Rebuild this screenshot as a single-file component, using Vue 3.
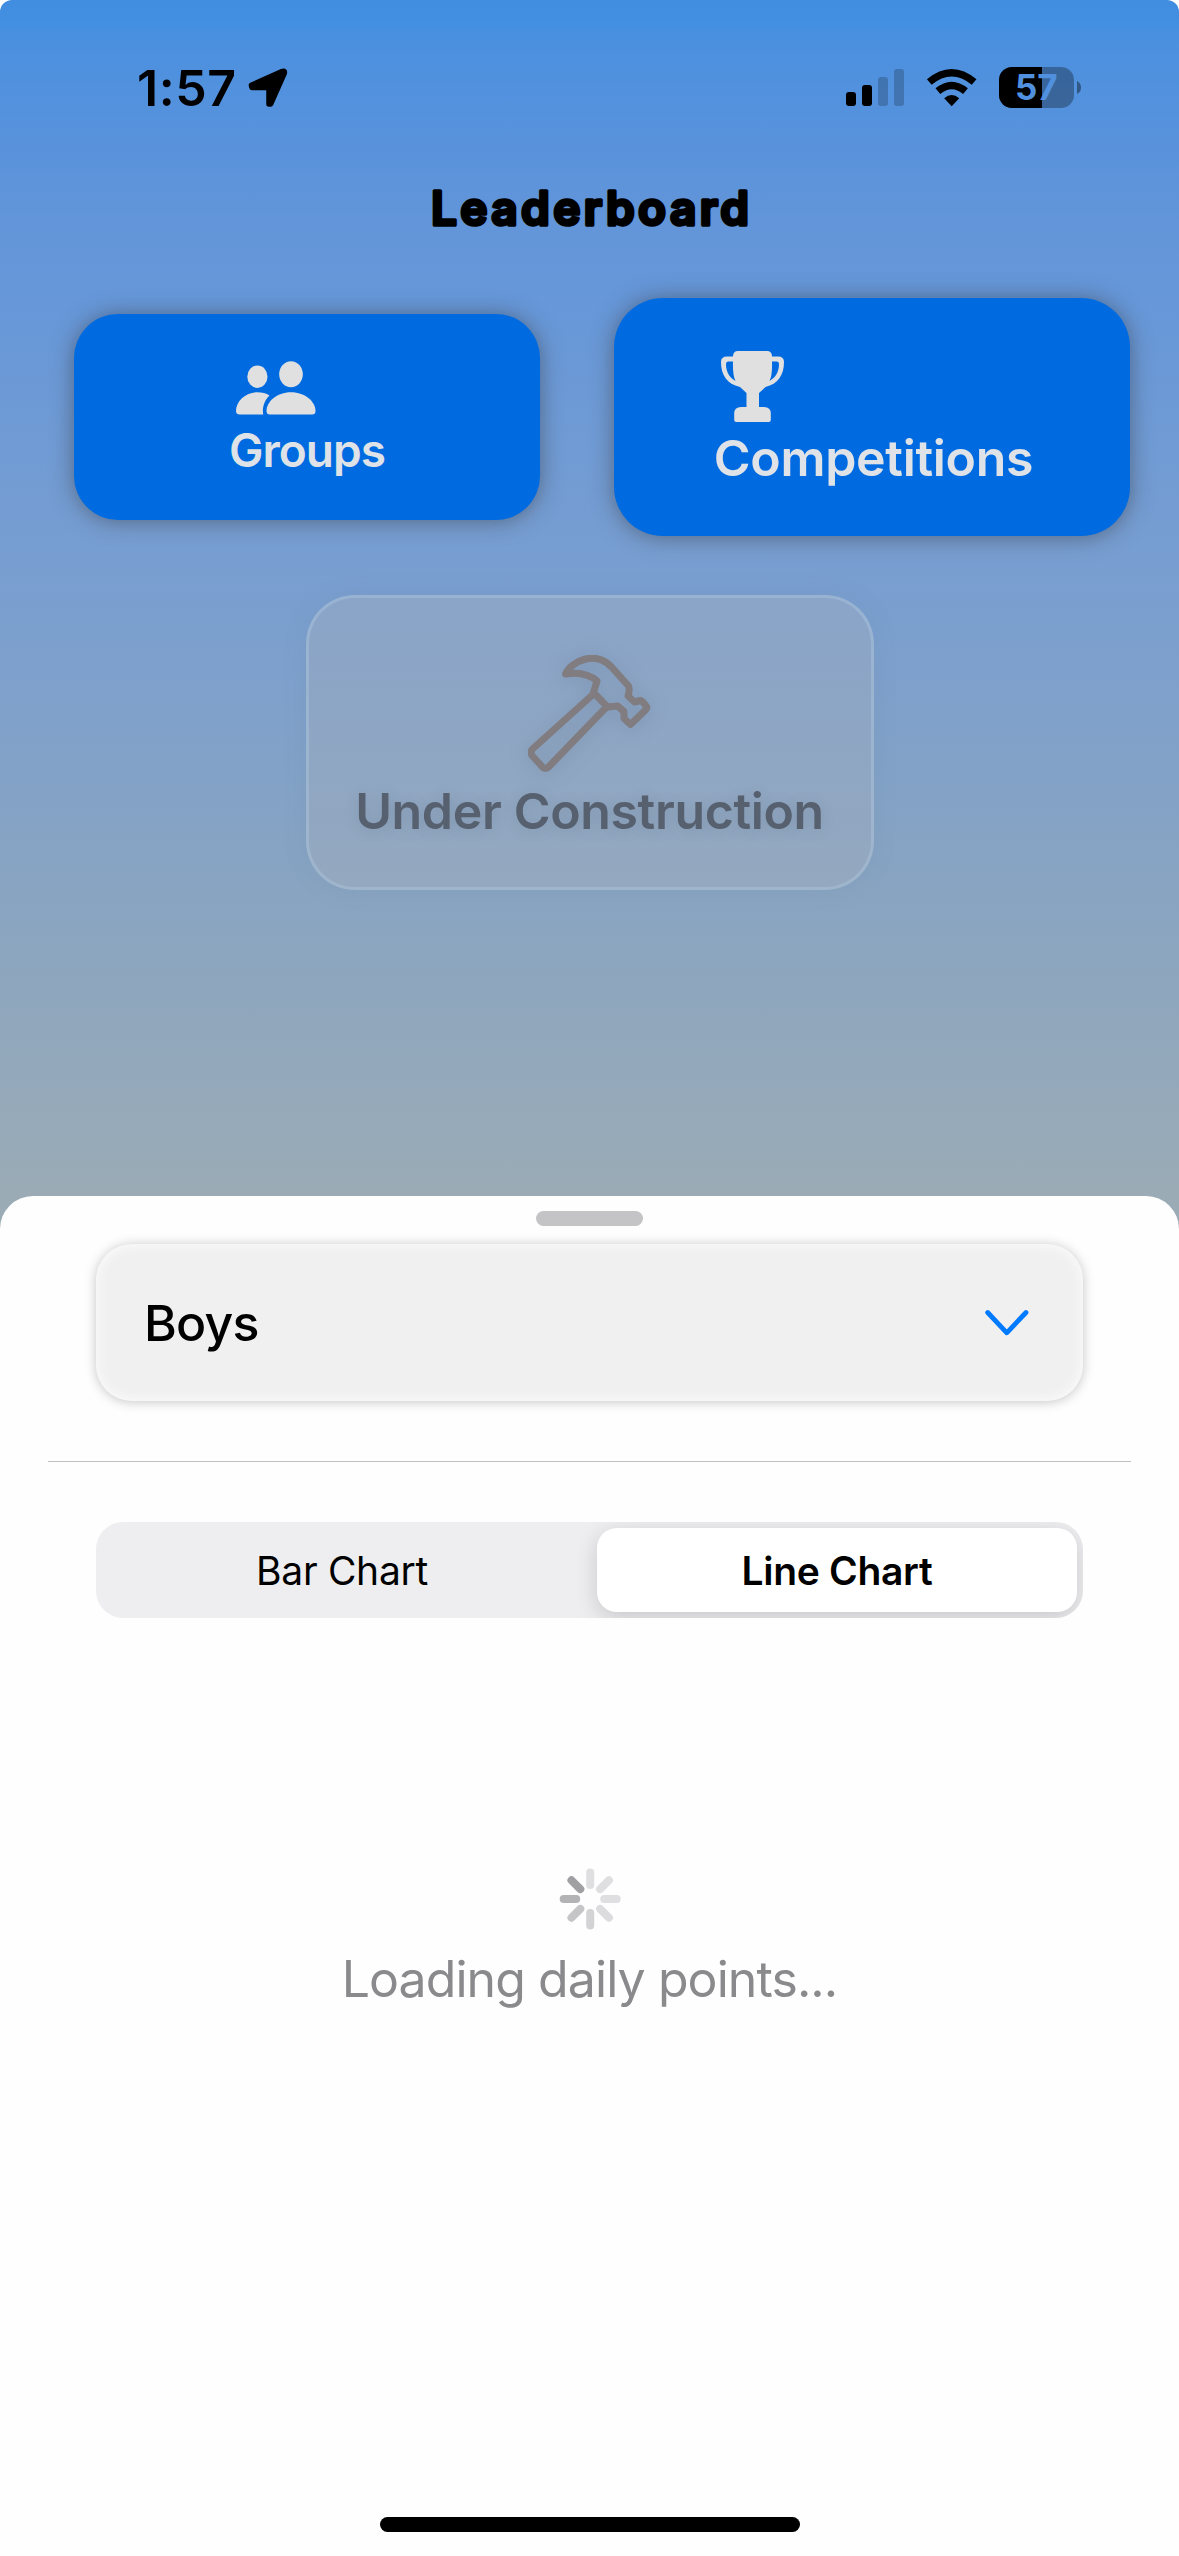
<script setup>
const petals = [
  { angle: 0, color: '#dfdfe1' },
  { angle: 45, color: '#dfdfe1' },
  { angle: 90, color: '#dfdfe1' },
  { angle: 135, color: '#dcdcde' },
  { angle: 180, color: '#d3d3d5' },
  { angle: 225, color: '#c5c5c7' },
  { angle: 270, color: '#b3b3b5' },
  { angle: 315, color: '#a0a0a2' },
]
const segments = [
  { label: 'Bar Chart', active: false },
  { label: 'Line Chart', active: true },
]
</script>

<template>
  <div class="screen">
    <div class="backdrop">
      <header class="status">
        <div class="status-left">
          <span class="time">1:57</span>
          <svg class="arrow" width="40" height="40" viewBox="0 0 40 40">
            <path d="M3.400 17.200 34 3.500Q37.500 2.200 36 6L22.700 36 21 36V19.500H4Z" stroke="#000" stroke-width="5.500" stroke-linejoin="round" />
          </svg>
        </div>
        <svg class="status-icons" width="236" height="44" viewBox="846 66 236 44">
          <rect x="846" y="92" width="10" height="14" rx="3" />
          <rect x="862" y="85" width="10" height="21" rx="3" />
          <rect x="878" y="77" width="10" height="29" rx="3" opacity=".2" />
          <rect x="894" y="69" width="10" height="37" rx="3" opacity=".2" />
          <g fill="none" stroke="#000" stroke-width="7.400">
            <path d="M929.300 82Q951.700 63.500 974.100 82" />
            <path d="M937.900 91.200Q951.700 79.800 965.500 91.200" />
          </g>
          <path d="M944.200 98.300Q951.700 91.700 959.200 98.300L951.700 106.200Z" />
          <clipPath id="charge"><rect x="999" y="67" width="43" height="41" /></clipPath>
          <rect x="999" y="67" width="75" height="41" rx="13" opacity=".3" />
          <rect x="999" y="67" width="75" height="41" rx="13" clip-path="url(#charge)" />
          <path d="M1077 81Q1081 83 1081 87.500T1077 94Z" opacity=".4" />
          <text x="1036.300" y="100" class="charge-text">57</text>
        </svg>
      </header>

      <h1 class="title">
        <svg width="360" height="60" viewBox="0 0 360 60">
          <text x="180" y="46" class="title-text" textLength="318" lengthAdjust="spacing">Leaderboard</text>
        </svg>
      </h1>

      <nav class="actions">
        <button class="action groups">
          <span class="inner">
            <svg class="groups-icon" width="80" height="54" viewBox="0 0 80 54">
              <ellipse cx="21.400" cy="15.700" rx="10.100" ry="11.200" />
              <ellipse cx="55" cy="13.200" rx="11.800" ry="13" />
              <path d="M4 53.500Q0 53.500 0 50C0 41 9 31.300 21.300 31.300Q28.500 31.300 33.500 34.500C28.500 39.500 26 46 27.200 53.500Z" />
              <path d="M34 53.500Q30.500 53.500 30.500 50C30.500 41 40.500 31.300 55 31.300S79.500 41 79.500 50Q79.500 53.500 76 53.500Z" />
            </svg>
            <span class="label">Groups</span>
          </span>
        </button>
        <button class="action competitions">
          <span class="inner">
            <svg class="trophy-icon" width="63" height="71" viewBox="0 0 63 71">
              <path d="M17 0H46Q51 0 51 5.500H57Q63 5.500 63 11C63 24 57 33 44.500 36L38 42V56H43Q49.800 56 49.800 62.500V69Q49.800 71 47.800 71H15.200Q13.200 71 13.200 69V62.500Q13.200 56 20 56H25.500V42L19 36C6 33 0 24 0 11Q0 5.500 6 5.500H12Q12 0 17 0Z" />
              <path class="hole" d="M12 10.500H7Q5 10.500 5 13C5 21 8.500 26.500 14.500 30Q11.500 24 12 10.500ZM51 10.500H56Q58 10.500 58 13C58 21 54.500 26.500 48.500 30Q51.500 24 51 10.500Z" />
            </svg>
            <span class="label">Competitions</span>
          </span>
        </button>
      </nav>

      <section class="notice">
        <svg class="hammer" width="124" height="117" viewBox="528.500 655 124 117">
          <g fill="none" stroke="#807c80" stroke-width="7" stroke-linejoin="round" stroke-linecap="round">
            <path d="M566 674C572 661 596 650 612 667L629 686Q630.500 689 628.500 696L635 702L641 700.500Q643 701 647 706.500Q648 708 646 710L631 724.500L624.500 718.500V711.500L618 706L608 707L594 692.500L597.500 681Q586 671 566 674Z" />
            <path d="M594 694 533 749Q530.500 752.500 532.500 755.500L543 767Q546 769.500 549 767L606 708" />
          </g>
        </svg>
        <p class="notice-text">Under Construction</p>
      </section>
    </div>

    <main class="sheet">
      <div class="grabber"></div>
      <div class="select">
        <span class="select-text">Boys</span>
        <svg class="chevron" width="44" height="27" viewBox="0 0 44 27">
          <path d="M2.700 3.500 21.800 23.800 41 3.500" fill="none" stroke="#007aff" stroke-width="4.800" stroke-linecap="round" stroke-linejoin="round" />
        </svg>
      </div>
      <hr class="divider" />
      <div class="segmented">
        <div v-for="s in segments" :key="s.label" class="segment" :class="{ active: s.active }">
          <span>{{ s.label }}</span>
        </div>
      </div>
      <div class="loading">
        <svg width="64" height="64" viewBox="-32.200 -32 64 64">
          <rect v-for="p in petals" :key="p.angle" x="-4" y="-30.500" width="8" height="20.500" rx="4" :fill="p.color" :transform="`rotate(${p.angle})`" />
        </svg>
        <p class="loading-text">Loading daily points...</p>
      </div>
      <div class="home"></div>
    </main>
  </div>
</template>

<style>
body {
  margin: 0;
  background: #fff;
}
</style>

<style scoped>
.screen {
  width: 1179px;
  height: 2556px;
  overflow: hidden;
  border-radius: 12px 12px 0 0;
  display: flex;
  flex-direction: column;
  font-family: Inter, "Liberation Sans", sans-serif;
  color: #000;
  background: linear-gradient(#418ee0 0, #428fe1 22px, #4a90e0 36px, #5792dc 130px, #6295d9 220px, #6697d9 290px, #789ed1 560px, #88a4c2 880px, #9aabb6 1190px, #9cacb5 1250px);
}
.backdrop {
  height: 1196px;
  flex: none;
}
.status {
  height: 176px;
  box-sizing: border-box;
  padding: 0 97px 0 137px;
  display: flex;
  align-items: center;
  justify-content: space-between;
}
.status-left {
  display: flex;
  align-items: center;
  gap: 10.5px;
}
.time {
  width: 100px;
  font-size: 50px;
  line-height: 60px;
  font-weight: 600;
  letter-spacing: .6px;
  white-space: nowrap;
}
.charge-text {
  font-size: 35px;
  font-weight: 700;
  fill: #5090de;
  text-anchor: middle;
}
.title {
  margin: 3px 0 0;
  height: 60px;
  display: flex;
  justify-content: center;
}
.title-text {
  font-size: 46px;
  font-weight: 620;
  text-anchor: middle;
  stroke: #000;
  stroke-width: 3.4px;
  stroke-linejoin: round;
}
.actions {
  display: flex;
  align-items: center;
  gap: 74px;
  margin: 59px 0 0 74px;
}
.action {
  font: inherit;
  border: 0;
  padding: 0;
  background: #006be1;
  color: #dfe2e6;
  display: flex;
  justify-content: center;
  box-shadow: 0 1px 22px rgba(50, 50, 50, .5);
}
.groups {
  width: 466px;
  height: 206px;
  border-radius: 44px;
}
.competitions {
  width: 516px;
  height: 238px;
  border-radius: 49px;
}
.inner {
  display: flex;
  flex-direction: column;
  align-items: flex-start;
}
.competitions .inner {
  margin-left: 3px;
}
.action svg {
  fill: #e0e0e0;
}
.action .hole {
  fill: #006be1;
}
.label {
  font-weight: 580;
  white-space: nowrap;
}
.groups-icon {
  margin: 47px 0 0 7px;
}
.groups .label {
  font-size: 46px;
  line-height: 56px;
  margin-top: 7px;
  letter-spacing: -.95px;
}
.trophy-icon {
  margin: 53px 0 0 7px;
}
.competitions .label {
  font-size: 50px;
  line-height: 60px;
  margin-top: 6px;
  letter-spacing: -.3px;
}
.notice {
  box-sizing: border-box;
  width: 568px;
  height: 295px;
  margin: 59px auto 0;
  border: 3px solid rgba(180, 205, 230, .35);
  border-radius: 49px;
  background: rgba(176, 178, 184, .3);
  box-shadow: 0 0 24px rgba(90, 120, 150, .12);
  display: flex;
  flex-direction: column;
  align-items: center;
}
.hammer {
  margin-top: 57px;
  filter: drop-shadow(0 2px 9px rgba(70, 90, 110, .25));
}
.notice-text {
  margin: 9px 0 0;
  font-size: 50px;
  line-height: 60px;
  font-weight: 580;
  color: #56606f;
  white-space: nowrap;
  letter-spacing: -.35px;
  text-shadow: 0 2px 14px rgba(70, 90, 110, .2);
}
.sheet {
  flex: 1;
  box-sizing: border-box;
  background: #fefefe;
  border-radius: 33px 33px 0 0;
  padding: 15px 0 24px;
  display: flex;
  flex-direction: column;
  align-items: center;
}
.grabber {
  width: 107px;
  height: 15px;
  border-radius: 7.5px;
  background: #c4c4c7;
}
.select {
  box-sizing: border-box;
  width: 987px;
  height: 157px;
  margin-top: 18px;
  padding: 0 54px 0 48px;
  border-radius: 36px;
  background: #f0f0f0;
  box-shadow: 0 1px 12px rgba(0, 0, 0, .23), inset 0 0 14px rgba(255, 255, 255, .9);
  display: flex;
  align-items: center;
  justify-content: space-between;
}
.select-text {
  font-size: 50px;
  line-height: 60px;
  font-weight: 450;
  letter-spacing: -.8px;
}
.divider {
  width: 1083px;
  height: 1px;
  flex: none;
  margin: 60px 0;
  border: 0;
  background: #c0c0c2;
}
.segmented {
  box-sizing: border-box;
  width: 987px;
  height: 96px;
  padding: 6px;
  border-radius: 27px;
  background: #eeeef0;
  overflow: hidden;
  display: flex;
  justify-content: space-between;
  flex: none;
}
.segment {
  width: 480px;
  height: 84px;
  border-radius: 20px;
  display: flex;
  align-items: center;
  justify-content: center;
  font-size: 39px;
  letter-spacing: -.3px;
  white-space: nowrap;
}
.segment.active {
  background: #fff;
  font-weight: 580;
  box-shadow: 0 6px 22px rgba(0, 0, 0, .16);
}
.loading {
  margin-top: 249px;
  display: flex;
  flex-direction: column;
  align-items: center;
}
.loading-text {
  margin: 18px 0 0;
  font-size: 50px;
  line-height: 60px;
  letter-spacing: -.92px;
  color: #8a8a8d;
  white-space: nowrap;
}
.home {
  margin-top: auto;
  width: 420px;
  height: 15px;
  border-radius: 8px;
  background: #000;
}
</style>
